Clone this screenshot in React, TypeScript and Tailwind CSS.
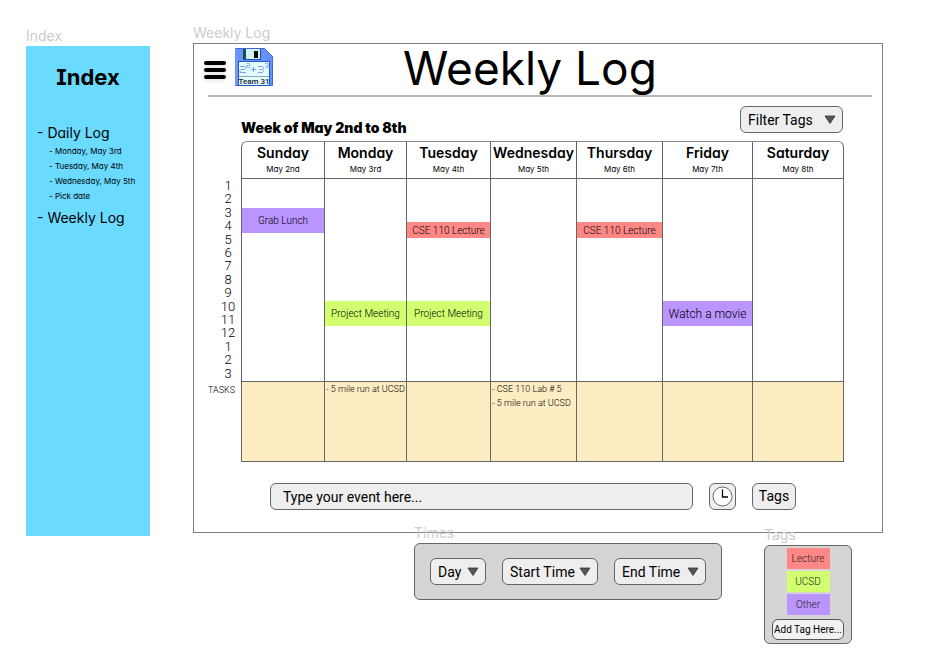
import React from "react";

const ROUNDED_FACE = "font-[Inter,sans-serif] [font-feature-settings:'cv11','cv08']";

type EventTone = "lecture" | "ucsd" | "other";

const TONES: Record<EventTone, string> = {
  lecture: "bg-[#ff8887]",
  ucsd: "bg-[#d2ff70]",
  other: "bg-[#ba94ff]",
};

interface DayEvent {
  title: string;
  tone: EventTone;
  box: string;
}

interface Day {
  name: string;
  date: string;
  col: string;
  events?: DayEvent[];
  tasks?: string[];
}

const LECTURE: DayEvent = { title: "CSE 110 Lecture", tone: "lecture", box: "mt-[43px] h-4 text-[10px]" };

const DAYS: Day[] = [
  { name: "Sunday", date: "May 2nd", col: "w-[83px]", events: [{ title: "Grab Lunch", tone: "other", box: "mt-[29px] h-[25px] text-[10px]" }] },
  { name: "Monday", date: "May 3rd", col: "w-[82px]", events: [{ title: "Project Meeting", tone: "ucsd", box: "mt-[122px] h-[25px] text-[10px]" }], tasks: ["- 5 mile run at UCSD"] },
  { name: "Tuesday", date: "May 4th", col: "w-[84px]", events: [LECTURE, { title: "Project Meeting", tone: "ucsd", box: "mt-[63px] h-[25px] text-[10px]" }] },
  { name: "Wednesday", date: "May 5th", col: "w-[86px]", tasks: ["- CSE 110 Lab # 5", "- 5 mile run at UCSD"] },
  { name: "Thursday", date: "May 6th", col: "w-[86px]", events: [LECTURE] },
  { name: "Friday", date: "May 7th", col: "w-[90px]", events: [{ title: "Watch a movie", tone: "other", box: "mt-[122px] h-[25px] text-[12px]" }] },
  { name: "Saturday", date: "May 8th", col: "w-[92px]" },
];

const HOURS = [1, 2, 3, 4, 5, 6, 7, 8, 9, 10, 11, 12, 1, 2, 3];

function FrameLabel({ children }: { children: string }) {
  return <p className="font-[Inter,sans-serif] text-[14px] leading-4 text-[#cccccc]">{children}</p>;
}

function Dropdown({ label, width }: { label: string; width: string }) {
  return (
    <div className={`grid items-center ${width}`}>
      <select
        aria-label={label}
        className="col-start-1 row-start-1 h-[27px] w-full appearance-none rounded-md border border-[#666] bg-[#eeeeee] pl-[7px] text-[14px] leading-5 text-black"
      >
        <option>{label}</option>
      </select>
      <svg className="pointer-events-none col-start-1 row-start-1 mr-[7px] justify-self-end" width="12" height="9" viewBox="0 0 12 9" aria-hidden="true">
        <path d="M1 1h10L6 8.5z" fill="#555" stroke="#333" strokeWidth="0.8" />
      </svg>
    </div>
  );
}

function FloppyLogo() {
  return (
    <svg width="38" height="38" viewBox="0 0 38 38" role="img" aria-label="Team 31">
      <path d="M.5.5h29l8 8v29H.5z" fill="#6690fa" stroke="#3f68e0" />
      <path d="M1 37V1" stroke="#8fb0ff" />
      <rect x="8" y="1" width="18" height="11" fill="#1d4fae" />
      <rect x="11" y="1" width="14" height="10" fill="#d4f0f0" />
      <rect x="8" y="1" width="3" height="10" fill="#14504f" />
      <rect x="19" y="3" width="4" height="7" fill="#080808" />
      <rect x="3.5" y="13.5" width="31" height="24" fill="#e2fbff" stroke="#2457bd" />
      <path d="M4 28.5h30" stroke="#8ab" />
      <g fill="none" stroke="#7ba0f5">
        <path d="M5 18.5h4.500l1 1v1l-1 1h-3.500l-1 1v2H11" />
        <path d="M11.500 15.500h3v2h-3v2H15" strokeWidth="0.8" />
        <path d="M16 21.500h5M18.500 19v5" />
        <path d="M23 18.500h4.500l1 1v1l-1 1H24.500M27.500 21.500l1 1v1l-1 1H23" />
        <path d="M30 15.500h3v4h-3M31 17.500h2" strokeWidth="0.8" />
      </g>
      <text x="19" y="36" fontSize="8" fontWeight="500" textAnchor="middle" fill="#123" fontFamily="Roboto, sans-serif">Team 31</text>
    </svg>
  );
}

function Sidebar() {
  return (
    <nav className="w-[124px] shrink-0 pt-[28px]" aria-label="Index">
      <FrameLabel>Index</FrameLabel>
      <div className={`mt-[2px] h-[490px] bg-[#6bdaff] text-black ${ROUNDED_FACE}`}>
        <h2 className="pt-[17px] text-center text-[22px] leading-7 font-bold">Index</h2>
        <ul className="pt-[33px] pl-[11px] text-[14px] leading-[18px]">
          <li>
            <a href="#daily">- Daily Log</a>
            <ul className="pt-[2px] pb-[5px] pl-3 text-[8px] leading-[15px] whitespace-nowrap">
              <li><a href="#may-3">- Monday, May 3rd</a></li>
              <li><a href="#may-4">- Tuesday, May 4th</a></li>
              <li><a href="#may-5">- Wednesday, May 5th</a></li>
              <li><a href="#pick">- Pick date</a></li>
            </ul>
          </li>
          <li><a href="#weekly">- Weekly Log</a></li>
        </ul>
      </div>
    </nav>
  );
}

function WeekTable() {
  return (
    <table className="w-full table-fixed border-separate border-spacing-0">
      <colgroup>
        <col className="w-[36px]" />
        {DAYS.map((d) => <col key={d.name} className={d.col} />)}
      </colgroup>
      <thead>
        <tr className={`h-[38px] ${ROUNDED_FACE}`}>
          <td />
          {DAYS.map((d) => (
            <th key={d.name} scope="col" className="border-t border-b border-l border-t-[#888] border-b-[#666] border-l-[#666] p-0 align-top first-of-type:rounded-tl-md last:rounded-tr-md last:border-r last:border-r-[#666]">
              <span className="-mx-1 block pt-[2px] text-[14px] leading-[18px] font-semibold">{d.name}</span>
              <span className="block text-[8px] leading-[15px] font-normal">{d.date}</span>
            </th>
          ))}
        </tr>
      </thead>
      <tbody>
        <tr className="h-[203px]">
          <th scope="row" className="p-0 align-top font-light">
            <div className="grid h-[201px] grid-rows-[repeat(15,minmax(0,1fr))] pl-[10px] text-[13px] leading-[14px]">
              {HOURS.map((h, i) => <span key={i}>{h}</span>)}
            </div>
          </th>
          {DAYS.map((d) => (
            <td key={d.name} className="border-b border-l border-[#666] p-0 align-top last:border-r">
              {d.events?.map((e) => (
                <div key={e.title} className={`flex items-center justify-center font-light whitespace-nowrap ${e.box} ${TONES[e.tone]}`}>
                  {e.title}
                </div>
              ))}
            </td>
          ))}
        </tr>
        <tr className="h-[80px]">
          <th scope="row" className="p-0 pt-px pr-[6px] text-right align-top text-[9px] leading-[14px] font-light">TASKS</th>
          {DAYS.map((d) => (
            <td key={d.name} className="border-b border-l border-[#666] bg-[#feecc3] p-0 pl-px align-top last:border-r">
              {d.tasks && (
                <ul className="text-[9px] leading-[14px] font-light whitespace-nowrap">
                  {d.tasks.map((t) => <li key={t}>{t}</li>)}
                </ul>
              )}
            </td>
          ))}
        </tr>
      </tbody>
    </table>
  );
}

function WeeklyLog() {
  return (
    <section className="pt-[25px]">
      <FrameLabel>Weekly Log</FrameLabel>
      <div className="mt-[2px] border border-[#808080] bg-white pb-[22px]">
        <header className="mr-[10px] ml-[14px] grid h-[53px] grid-cols-[1fr_auto_1fr] items-start border-b-2 border-[#b8b8b8]">
          <div className="-ml-1 flex items-center gap-[9px] pt-1">
            <button aria-label="Menu" className="mt-[6px] flex w-[22px] flex-col gap-[3px] drop-shadow-sm">
              <span className="h-1 rounded-full bg-black" />
              <span className="h-1 rounded-full bg-black" />
              <span className="h-1 rounded-full bg-black" />
            </button>
            <FloppyLogo />
          </div>
          <h1 className={`-ml-5 text-[46px] leading-[48px] font-normal ${ROUNDED_FACE}`}>Weekly Log</h1>
        </header>
        <div className="pr-[38px] pl-[11px]">
          <div className="flex items-start justify-between pt-[9px] pr-px pl-9">
            <h2 className={`pt-[13px] text-[14px] leading-[18px] font-black ${ROUNDED_FACE}`}>Week of May 2nd to 8th</h2>
            <Dropdown label="Filter Tags" width="w-[103px]" />
          </div>
          <div className="pt-1"><WeekTable /></div>
        </div>
        <form className="flex items-center pt-[21px] pr-[86px] pl-[76px]" onSubmit={(e) => e.preventDefault()}>
          <input aria-label="Event" placeholder="Type your event here..." className="h-[27px] min-w-0 flex-1 rounded-md border border-[#666] bg-[#eeeeee] px-3 text-[14px] placeholder:text-black" />
          <button type="button" aria-label="Pick time" className="ml-4 flex size-[27px] items-center justify-center rounded-md border border-[#666] bg-[#eeeeee]">
            <svg width="21" height="21" viewBox="0 0 21 21" aria-hidden="true">
              <circle cx="10.5" cy="10.5" r="9.5" fill="white" stroke="#444" strokeWidth="0.8" />
              <path d="M10.5 3.5v7.500h5.500" fill="none" stroke="black" strokeWidth="1.3" />
            </svg>
          </button>
          <button type="button" className="ml-4 h-[27px] w-11 rounded-md border border-[#666] bg-[#eeeeee] text-[14px]">Tags</button>
        </form>
      </div>
    </section>
  );
}

export default function App() {
  return (
    <div className="flex min-h-screen gap-[43px] bg-white pr-[55px] pl-[26px] font-[Roboto,sans-serif] text-black">
      <Sidebar />
      <main className="min-w-0 flex-1">
        <WeeklyLog />
        <div className="-mt-2 flex items-start justify-end gap-[42px] pr-[31px]">
          <section>
            <FrameLabel>Times</FrameLabel>
            <div className="mt-[2px] flex gap-4 rounded-md border border-[#666] bg-[#d5d5d5] px-[15px] py-[14px]">
              <Dropdown label="Day" width="w-14" />
              <Dropdown label="Start Time" width="w-24" />
              <Dropdown label="End Time" width="w-[92px]" />
            </div>
          </section>
          <section className="w-[88px] pt-[2px]">
            <FrameLabel>Tags</FrameLabel>
            <div className="mt-[2px] flex flex-col items-center gap-[2px] rounded-md border border-[#666] bg-[#d5d5d5] pt-[2px] pb-[3px] text-[10px] font-light text-[#222]">
              <span className="flex h-[21px] w-[43px] items-center justify-center bg-[#ff8887]">Lecture</span>
              <span className="flex h-[21px] w-[43px] items-center justify-center bg-[#d2ff70]">UCSD</span>
              <span className="flex h-[21px] w-[43px] items-center justify-center bg-[#ba94ff]">Other</span>
              <input aria-label="Add tag" placeholder="Add Tag Here..." className="mt-[2px] h-[21px] w-[72px] rounded-md border border-[#555] bg-[#f2f2f2] px-px text-[10px] font-normal placeholder:text-black" />
            </div>
          </section>
        </div>
      </main>
    </div>
  );
}
